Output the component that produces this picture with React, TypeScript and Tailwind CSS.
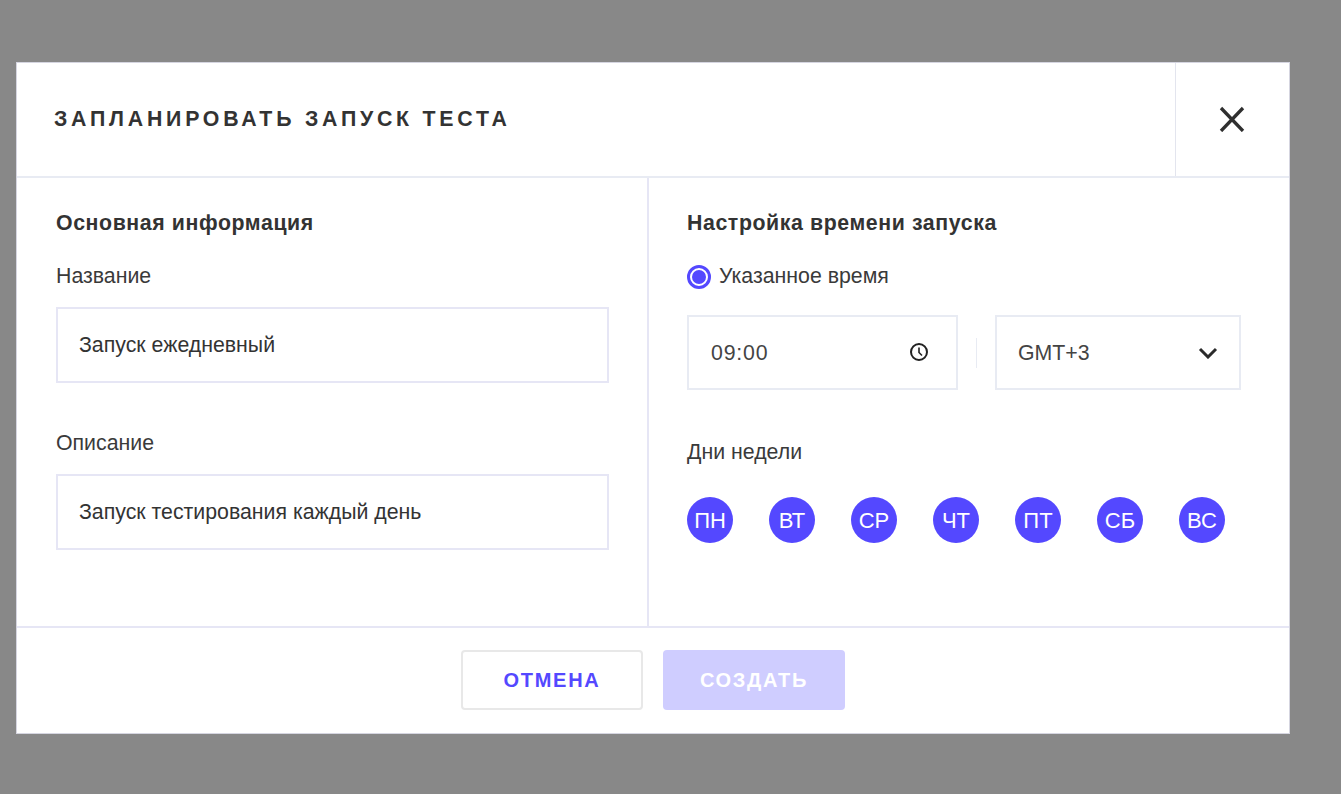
const days = ["ПН", "ВТ", "СР", "ЧТ", "ПТ", "СБ", "ВС"];

function TextField({ label, value, className }: { label: string; value: string; className?: string }) {
  return (
    <div className={className}>
      <div className="h-[24px] text-[21.3px] leading-[24px] text-[#3a3a3a]">{label}</div>
      <div className="mt-[19px] flex h-[76px] items-center border-2 border-[#e6e6f5] pl-[21px] pt-[2px] text-[21.3px] text-[#333]">
        {value}
      </div>
    </div>
  );
}

export default function App() {
  return (
    <div className="h-[794px] w-[1341px] overflow-hidden bg-[#888888] pl-[16px] pt-[62px] font-['Liberation_Sans',sans-serif]">
      <div className="flex h-[672px] w-[1274px] flex-col border border-[#d5d5e0] bg-white">
        {/* header */}
        <div className="flex h-[115px] shrink-0 border-b-2 border-[#e8ebf3]">
          <div className="flex flex-1 items-center pl-[37px] pt-[1px] text-[21.3px] font-bold tracking-[3.77px] text-[#333]">
            ЗАПЛАНИРОВАТЬ ЗАПУСК ТЕСТА
          </div>
          <div className="flex w-[114px] items-center justify-center border-l border-[#e3e5ee] pb-[2px] pr-[2px]">
            <svg width="26" height="26" viewBox="0 0 26 26" fill="none" stroke="#2f2f2f" strokeWidth="3.3">
              <path d="M2 2 L24 25 M24 2 L2 25" />
            </svg>
          </div>
        </div>

        {/* body */}
        <div className="flex h-[448px] shrink-0">
          <div className="w-[632px] shrink-0 border-r-2 border-[#e6e6f5] pl-[39px] pr-[38px] pt-[33px]">
            <div className="text-[21.3px] font-bold leading-[24px] tracking-[0.6px] text-[#333]">Основная информация</div>
            <TextField className="mt-[29px]" label="Название" value="Запуск ежедневный" />
            <TextField className="mt-[48px]" label="Описание" value="Запуск тестирования каждый день" />
          </div>

          <div className="flex-1 pl-[38px] pt-[33px]">
            <div className="text-[21.3px] font-bold leading-[24px] tracking-[0.6px] text-[#333]">Настройка времени запуска</div>
            <div className="mt-[30px] flex h-[24px] items-center gap-[8px]">
              <span className="flex h-[24px] w-[24px] items-center justify-center rounded-full border-[3px] border-[#5448ff]">
                <span className="h-[14px] w-[14px] rounded-full bg-[#5448ff]" />
              </span>
              <span className="pb-[2px] text-[21.3px] leading-[24px] text-[#3a3a3a]">Указанное время</span>
            </div>
            <div className="mt-[26px] flex items-center">
              <div className="flex h-[75px] w-[271px] items-center justify-between border-2 border-[#e8ebf3] pl-[22px] pr-[27px] pt-[2px] text-[21.3px] tracking-[0.8px] text-[#444]">
                <span>09:00</span>
                <svg className="mb-[3px]" width="20" height="20" viewBox="0 0 20 20" fill="none" stroke="#222" strokeWidth="2">
                  <circle cx="10" cy="10" r="8" />
                  <path d="M10 5.5 V10.5 L13 13.5" strokeWidth="1.6" />
                </svg>
              </div>
              <div className="ml-[18px] h-[30px] w-px bg-[#e8ebf3]" />
              <div className="ml-[18px] flex h-[75px] w-[246px] items-center justify-between border-2 border-[#e8ebf3] pl-[21px] pr-[21px] pt-[2px] text-[21.3px] text-[#444]">
                <span>GMT+3</span>
                <svg className="mb-[2px]" width="20" height="12" viewBox="0 0 20 12" fill="none" stroke="#2a2a2a" strokeWidth="3">
                  <path d="M2 2 L10 10 L18 2" />
                </svg>
              </div>
            </div>
            <div className="mt-[50px] h-[24px] text-[21.3px] leading-[24px] text-[#3a3a3a]">Дни недели</div>
            <div className="mt-[33px] flex gap-[36px]">
              {days.map((d) => (
                <div
                  key={d}
                  className="flex h-[46px] w-[46px] items-center justify-center rounded-full bg-[#5448ff] text-[22px] text-white"
                >
                  {d}
                </div>
              ))}
            </div>
          </div>
        </div>

        {/* footer */}
        <div className="flex flex-1 items-start justify-center gap-[20px] border-t-2 border-[#e6e6f5] pt-[22px]">
          <button className="flex h-[60px] w-[182px] items-center justify-center rounded-[4px] border-2 border-[#e8e8e8] text-[20px] font-bold tracking-[1.7px] text-[#5448ff]">
            ОТМЕНА
          </button>
          <button className="flex h-[60px] w-[182px] items-center justify-center rounded-[4px] bg-[#cfcdff] text-[20px] font-bold tracking-[1.7px] text-white">
            СОЗДАТЬ
          </button>
        </div>
      </div>
    </div>
  );
}
